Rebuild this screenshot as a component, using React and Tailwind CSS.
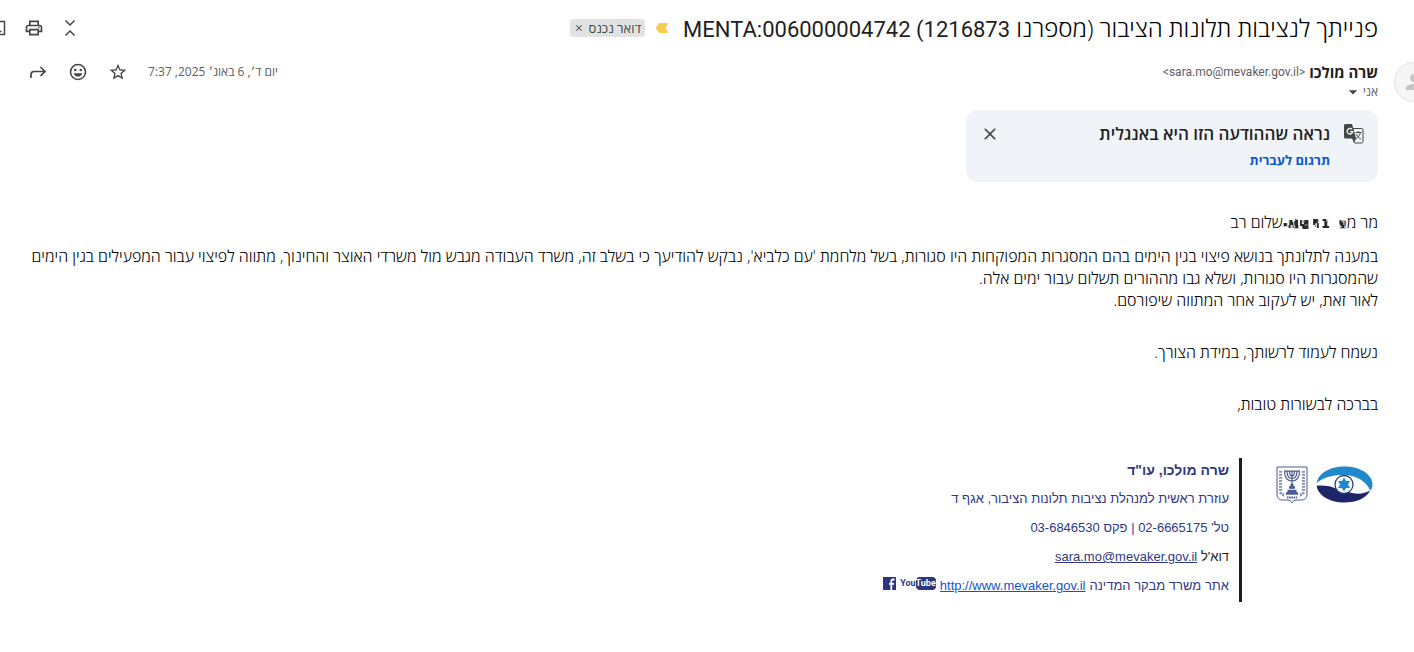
import {
  MdArrowDropDown,
  MdClose,
  MdOutlinePrint,
  MdPerson,
  MdStarBorder,
} from 'react-icons/md';

const bodyLines = [
  "במענה לתלונתך בנושא פיצוי בגין הימים בהם המסגרות המפוקחות היו סגורות, בשל מלחמת 'עם כלביא', נבקש להודיעך כי בשלב זה, משרד העבודה מגבש מול משרדי האוצר והחינוך, מתווה לפיצוי עבור המפעילים בגין הימים שהמסגרות היו סגורות, ושלא גבו מההורים תשלום עבור ימים אלה.",
  'לאור זאת, יש לעקוב אחר המתווה שיפורסם.',
];

function IconButton({ label, children }) {
  return (
    <button type="button" aria-label={label} className="flex h-5 w-5 shrink-0 items-center justify-center text-[#444746]">
      {children}
    </button>
  );
}

function CollapseIcon() {
  return (
    <svg viewBox="0 0 20 20" className="h-5 w-5" fill="none" stroke="currentColor" strokeWidth="1.5">
      <path d="M5.5 2.5 10 7l4.5-4.5M5.5 17.5 10 13l4.5 4.5" />
    </svg>
  );
}

function PopoutIcon() {
  return (
    <svg viewBox="0 0 20 20" className="h-5 w-5" fill="none" stroke="currentColor" strokeWidth="1.5">
      <path d="M9 3.5H4v13h12.5v-13H12M12 13.5h1.5" />
    </svg>
  );
}

function EmojiIcon() {
  return (
    <svg viewBox="0 0 20 20" className="h-5 w-5" fill="none" stroke="currentColor">
      <circle cx="10" cy="10" r="7.5" strokeWidth="1.6" />
      <circle cx="7.2" cy="8" r="1.3" fill="currentColor" stroke="none" />
      <circle cx="12.8" cy="8" r="1.3" fill="currentColor" stroke="none" />
      <path d="M5.6 11.2h8.8c-.6 2-2.3 3.4-4.4 3.4s-3.8-1.4-4.4-3.4z" fill="currentColor" stroke="none" />
    </svg>
  );
}

function ForwardIcon() {
  return (
    <svg viewBox="0 0 20 20" className="h-5 w-5" fill="none" stroke="currentColor" strokeWidth="1.7">
      <path d="M3 16v-3.5a3 3 0 0 1 3-3H16.5M12.5 5l4.5 4.5-4.5 4.5" />
    </svg>
  );
}

function ImportanceMarker() {
  return (
    <svg viewBox="0 0 14 10" className="h-[10px] w-[14px]" fill="#f7cb4d">
      <path d="M4.5 0H13.5L10.5 5l3 5h-9L.5 5z" />
    </svg>
  );
}

function TranslateIcon() {
  return (
    <svg viewBox="0 0 20 20" className="h-5 w-5" fill="none">
      <path d="M8.5 4.5h9A1.5 1.5 0 0 1 19 6v11.5a1.5 1.5 0 0 1-1.5 1.5H11l-3-5" fill="#f0f4f9" stroke="#444746" />
      <path d="M1.5 0H8l4.2 14.5H1.5A1.5 1.5 0 0 1 0 13V1.5A1.5 1.5 0 0 1 1.5 0zM9 14.5h3.2L9.8 19z" fill="#444746" />
      <path d="M8 5.4A2.8 2.8 0 1 0 8.7 7.6H6" stroke="#f0f4f9" strokeWidth="1.3" />
      <path d="M11.5 8.5h6M14.3 7v1.5M16.3 8.5c-.3 2.5-1.8 4.5-4 6M12.5 10c.8 2 2.3 3.7 4.3 5" stroke="#444746" />
    </svg>
  );
}

function RedactedName() {
  return (
    <svg viewBox="0 0 68 14" className="inline-block h-[14px] w-16 align-middle" preserveAspectRatio="none" role="img" aria-label="שם מוסתר">
      <g fill="#8e958e" opacity="0.6">
        <path d="M0 6h5v4H0zM20 3h5v3h-5zM12 8h5v4h-5zM32 2h6v3h-6zM44 3h4v3h-4zM60 3h7v9h-7zM6 3h3v8H6z" />
      </g>
      <g fill="#262b26">
        <path d="M1 6h3v3H1zM7 3h3v2h1v3H8v3H6V8h1zM13 2l3 1v8h-3V8h-1V4h1zM18 3h2v4h2l1-4h4v9h-6l-1-3h-2zM32 2h5v4h-2l-1 2h-2zM36 6h2v5h-2zM42 2h4v3h1v4h2v2h-7V9h2V4h-2zM60 3h1l3 3v3h-2l-2-2zM63 8h2v3h-3z" />
      </g>
      <path d="M10 8h2v3h-2zM23 7h3v2h-3zM34 8h1v2h-1zM65 4h2v5h-2z" fill="#6f6f6f" />
    </svg>
  );
}

function EyeLogo() {
  return (
    <svg viewBox="0 0 57 38" className="h-[38px] w-[57px]" role="img" aria-label="משרד מבקר המדינה">
      <path d="M.5 18.5C1 8 13 .5 28.5.5S56 8 56.5 18.5c0 2-.7 4-2 6L1 20z" fill="#2089cd" />
      <path d="M.5 18.5C1 29 13 36.5 28.5 36.5c12 0 21.5-4.5 25.5-11.5L28 16z" fill="#1d2468" />
      <path d="M0 17.5C7 11 18 8.5 29 9c13 .7 21 7 25.5 15.5C49 27.5 43 28.5 36 27L21 23c-6-3-13-4-21-3.3z" fill="#fff" />
      <circle cx="28" cy="18.5" r="9" fill="#fff" stroke="#25417f" strokeWidth="1.3" />
      <path d="m28 11.5 2 3.5h4l-2 3.5 2 3.5h-4l-2 3.5-2-3.5h-4l2-3.5-2-3.5h4z" fill="#2089cd" />
    </svg>
  );
}

function StateEmblem() {
  return (
    <svg viewBox="0 0 32 38" className="h-[38px] w-8" fill="none" stroke="#4d5a8f" role="img" aria-label="סמל המדינה">
      <path d="M1 1h30v27c0 4-2 6-6 6h-4c-3 0-4 1-5 3-1-2-2-3-5-3H7c-4 0-6-2-6-6z" />
      <path d="M8.5 5c0 6 2 10 7.5 10s7.5-4 7.5-10M11 5c0 5 1.5 7.5 5 7.5s5-2.5 5-7.5M13.5 5c0 3.5.5 5 2.5 5s2.5-1.5 2.5-5M16 4.5V23M8 5.2h16" strokeWidth="1.2" />
      <path d="M10 27.5h12M11.5 25h9M13 21.5h6M14.5 19h3" strokeWidth="2.4" />
      <path d="M4.5 5v20c0 3 2 4 5 4M27.5 5v20c0 3-2 4-5 4" strokeWidth="3" strokeDasharray="1.8 1.2" opacity="0.7" />
      <path d="M11 31.5h10" strokeWidth="2" strokeDasharray="1.5 .7" />
    </svg>
  );
}

function FacebookBadge() {
  return (
    <svg viewBox="0 0 13 13" className="h-[13px] w-[13px]" role="img" aria-label="Facebook">
      <path d="M0 0h13v13H0z" fill="#2b3580" />
      <path d="M11.5 2.5H10c-1.2 0-1.7.7-1.7 1.7V13M6 6.8h5" stroke="#fff" strokeWidth="1.8" fill="none" />
    </svg>
  );
}

function SubjectRow() {
  return (
    <header className="flex h-11 items-center pr-9 pt-3">
      <h1 className="text-2xl font-light leading-8 text-black">
        פנייתך לנציבות תלונות הציבור (מספרנו{' '}
        <span className="font-['Roboto',sans-serif] text-[22px] font-normal leading-6 text-[#1f1f1f]">1216873) MENTA:006000004742</span>
      </h1>
      <span className="mr-[14px]"><ImportanceMarker /></span>
      <span className="mr-[10px] flex h-[18px] items-center gap-1 rounded bg-[#e0e3e1] px-1 text-[13px] leading-4 text-[#444746]">
        דואר נכנס
        <button type="button" aria-label="הסרת התווית">
          <MdClose className="h-[10px] w-[10px]" />
        </button>
      </span>
      <div className="mr-auto flex items-center gap-4 pl-[60px]">
        <IconButton label="כיווץ הכול"><CollapseIcon /></IconButton>
        <IconButton label="הדפסה"><MdOutlinePrint className="h-5 w-5" /></IconButton>
        <span className="-ml-[72px]">
          <IconButton label="פתיחה בחלון חדש"><PopoutIcon /></IconButton>
        </span>
      </div>
    </header>
  );
}

function SenderRow() {
  return (
    <div className="mt-4 flex items-start">
      <div className="-mr-5 mt-[2px] flex h-10 w-10 shrink-0 items-center justify-center rounded-full border border-[#e0e0e0] bg-[#f5f5f5]">
        <MdPerson className="h-6 w-6 text-[#c4c4c4]" />
      </div>
      <div className="mr-4">
        <div className="flex h-6 items-center gap-1 leading-5">
          <span className="text-[15px] font-bold text-[#1f1f1f]">שרה מולכו</span>
          <span dir="ltr" className="font-['Roboto',sans-serif] text-xs text-[#5e5e5e]">&lt;sara.mo@mevaker.gov.il&gt;</span>
        </div>
        <button type="button" className="flex h-4 items-center text-xs text-[#5e5e5e]">
          אני
          <MdArrowDropDown className="h-5 w-5 text-[#444746]" />
        </button>
      </div>
      <div className="mr-auto flex h-6 items-center gap-5 pl-7">
        <time dateTime="2025-08-06T07:37" className="text-xs text-[#5e5e5e]">יום ד׳, 6 באוג׳ 2025, 7:37</time>
        <IconButton label="סימון בכוכב"><MdStarBorder className="h-5 w-5" /></IconButton>
        <IconButton label="הוספת תגובת אמוג׳י"><EmojiIcon /></IconButton>
        <IconButton label="העברה"><ForwardIcon /></IconButton>
      </div>
    </div>
  );
}

function TranslateBanner() {
  return (
    <section className="mt-2 flex w-[412px] items-start gap-[14px] rounded-xl bg-[#f0f4f9] px-[14px] py-3">
      <span className="mt-[2px]"><TranslateIcon /></span>
      <div>
        <p className="text-[17px] font-semibold leading-6 text-[#1f1f1f]">נראה שההודעה הזו היא באנגלית</p>
        <button type="button" className="mt-1 block text-[13px] font-bold leading-5 text-[#0b57d0]">תרגום לעברית</button>
      </div>
      <button type="button" aria-label="סגירה" className="mr-auto mt-[2px] text-[#444746]">
        <MdClose className="h-5 w-5" />
      </button>
    </section>
  );
}

function Signature() {
  return (
    <footer className="mt-[43px] flex font-['Liberation_Sans',Arial,sans-serif] text-[13px] leading-[29px] text-[#2f3985]">
      <div className="flex w-[136px] shrink-0 items-start gap-2 pr-[5px] pt-2">
        <EyeLogo />
        <StateEmblem />
      </div>
      <address className="border-r-[3px] border-[#1f1f1f] pb-[2px] pr-[10px] not-italic">
        <p className="text-sm font-bold leading-6">שרה מולכו, עו"ד</p>
        <p className="pt-[2px]">עוזרת ראשית למנהלת נציבות תלונות הציבור, אגף ד</p>
        <p>טל' 02-6665175 | פקס 03-6846530</p>
        <p>
          <span className="text-[#222222]">דוא'ל</span>{' '}
          <a href="mailto:sara.mo@mevaker.gov.il" className="underline">sara.mo@mevaker.gov.il</a>
        </p>
        <p className="flex items-center gap-1">
          אתר משרד מבקר המדינה
          <a href="http://www.mevaker.gov.il" className="text-[#1155cc] underline">http://www.mevaker.gov.il</a>
          <span dir="ltr" className="flex items-center gap-1 pb-1">
            <FacebookBadge />
            <span className="flex items-center font-['Roboto',sans-serif] text-[9px] font-bold leading-[13px]">
              You<span className="rounded-sm bg-[#2b3580] text-white">Tube</span>
            </span>
          </span>
        </p>
      </address>
    </footer>
  );
}

export default function App() {
  return (
    <main dir="rtl" className="min-h-screen overflow-hidden bg-white font-['Open_Sans',sans-serif] text-[#222222]">
      <SubjectRow />
      <SenderRow />
      <div className="pl-1 pr-9">
        <TranslateBanner />
        <article className="mt-[29px] text-base font-light leading-[22px] text-black">
          <p>
            מר מ<RedactedName />שלום רב
          </p>
          <div className="mt-3">
            {bodyLines.map((line) => (
              <p key={line}>{line}</p>
            ))}
          </div>
          <p className="mt-[30px]">נשמח לעמוד לרשותך, במידת הצורך.</p>
          <p className="mt-[30px]">בברכה לבשורות טובות,</p>
        </article>
        <Signature />
      </div>
    </main>
  );
}
